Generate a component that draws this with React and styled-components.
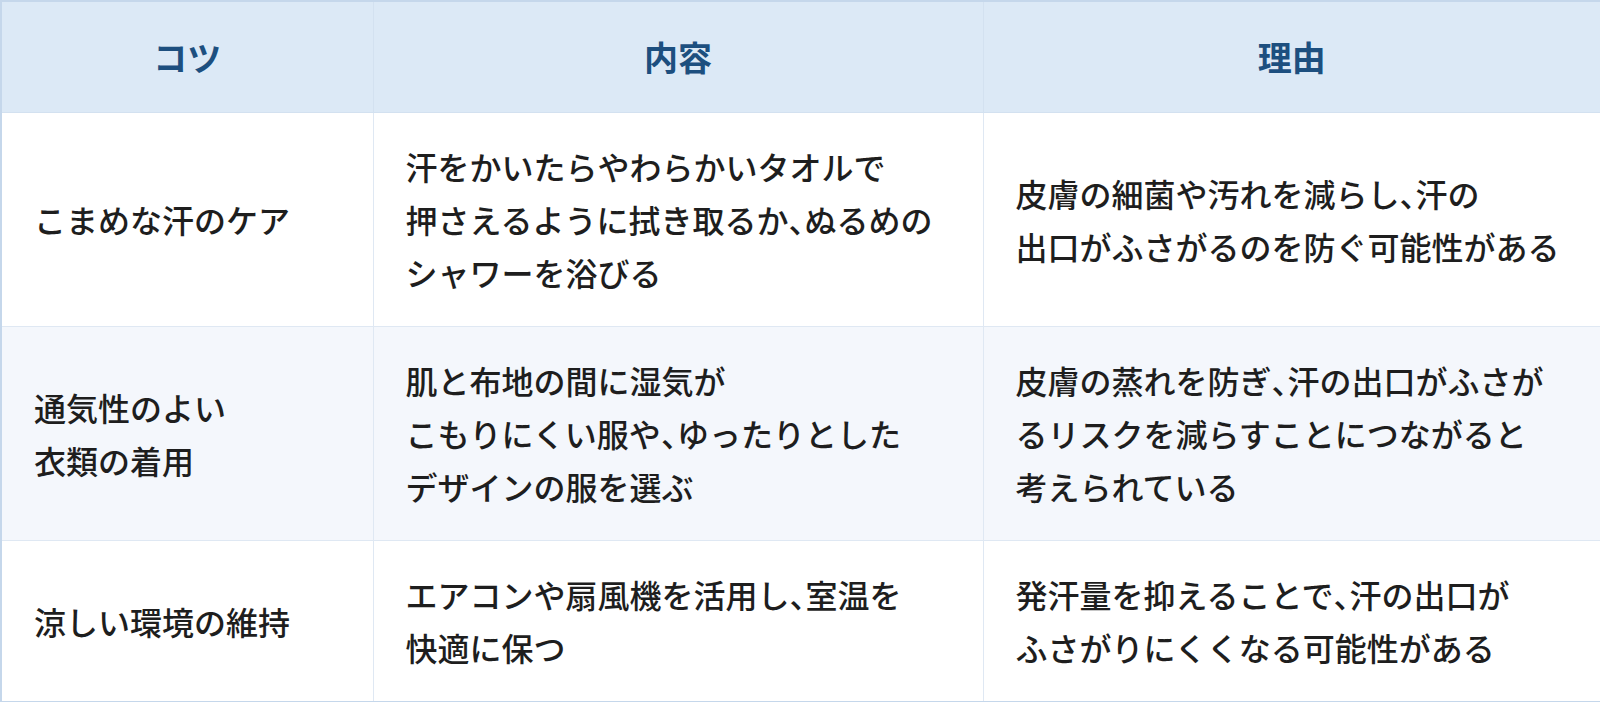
import React from "react";
import styled, { createGlobalStyle } from "styled-components";

const Global = createGlobalStyle`
  html, body { margin: 0; padding: 0; background: #ffffff; }
  body { font-family: "Noto Sans CJK JP", "Noto Sans", sans-serif; }
`;

const Table = styled.table`
  width: 1600px;
  border-collapse: collapse;
  table-layout: fixed;
  border: 2px solid #c5d7eb;
  font-family: "Noto Sans CJK JP", "Noto Sans", sans-serif;
`;

const Col = styled.col`
  width: ${(p) => p.$w}px;
`;

const HeadCell = styled.th`
  background: #dce9f6;
  color: #1d4f7f;
  font-size: 34px;
  font-weight: 700;
  line-height: 52px;
  padding: 29px 32px;
  text-align: center;
  border: 1px solid #d3e1f0;
`;

const Row = styled.tr`
  background: ${(p) => (p.$alt ? "#f4f7fc" : "#ffffff")};
`;

const Cell = styled.td`
  color: #1e1e1e;
  font-size: 32px;
  font-weight: 500;
  line-height: 53px;
  padding: 27px 32px;
  vertical-align: middle;
  white-space: nowrap;
  border: 1px solid #dfe8f3;
`;

const Punct = styled.span`
  font-feature-settings: "halt";
`;

const renderLine = (line) =>
  line.split("、").flatMap((part, i, arr) =>
    i < arr.length - 1 ? [part, <Punct key={i}>、</Punct>] : [part]
  );

const Lines = ({ lines }) =>
  lines.map((l, i) => (
    <React.Fragment key={i}>
      {renderLine(l)}
      {i < lines.length - 1 && <br />}
    </React.Fragment>
  ));

const rows = [
  {
    tip: ["こまめな汗のケア"],
    content: [
      "汗をかいたらやわらかいタオルで",
      "押さえるように拭き取るか、ぬるめの",
      "シャワーを浴びる",
    ],
    reason: ["皮膚の細菌や汚れを減らし、汗の", "出口がふさがるのを防ぐ可能性がある"],
  },
  {
    tip: ["通気性のよい", "衣類の着用"],
    content: [
      "肌と布地の間に湿気が",
      "こもりにくい服や、ゆったりとした",
      "デザインの服を選ぶ",
    ],
    reason: [
      "皮膚の蒸れを防ぎ、汗の出口がふさが",
      "るリスクを減らすことにつながると",
      "考えられている",
    ],
  },
  {
    tip: ["涼しい環境の維持"],
    content: ["エアコンや扇風機を活用し、室温を", "快適に保つ"],
    reason: ["発汗量を抑えることで、汗の出口が", "ふさがりにくくなる可能性がある"],
  },
];

export default function App() {
  return (
    <>
      <Global />
      <Table>
        <colgroup>
          <Col $w={372} />
          <Col $w={610} />
          <Col $w={618} />
        </colgroup>
        <thead>
          <tr>
            <HeadCell>コツ</HeadCell>
            <HeadCell>内容</HeadCell>
            <HeadCell>理由</HeadCell>
          </tr>
        </thead>
        <tbody>
          {rows.map((r, i) => (
            <Row key={i} $alt={i === 1}>
              <Cell>
                <Lines lines={r.tip} />
              </Cell>
              <Cell>
                <Lines lines={r.content} />
              </Cell>
              <Cell>
                <Lines lines={r.reason} />
              </Cell>
            </Row>
          ))}
        </tbody>
      </Table>
    </>
  );
}
